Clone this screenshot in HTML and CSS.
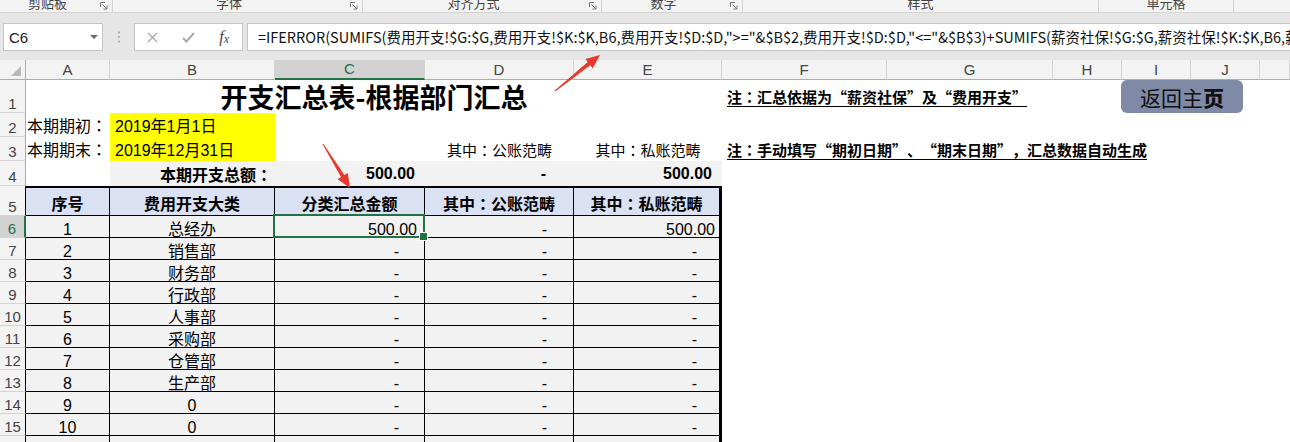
FILE: index.html
```html
<!DOCTYPE html>
<html>
<head>
  <meta charset="UTF-8">
  <title>开支汇总表</title>
  <link rel="stylesheet" href="styles.css">
</head>
<body>
  <div class="ribbon">
    <div class="grp g-clip"><span class="glabel">剪贴板</span><span class="launch"><svg width="8" height="8" viewBox="0 0 8 8"><path d="M0.5 5V0.5H5M2.5 2.5L7 7M7 3.5V7H3.5" fill="none" stroke="#7a7a7a" stroke-width="1"/></svg></span></div>
    <div class="grp g-font"><span class="glabel">字体</span><span class="launch"><svg width="8" height="8" viewBox="0 0 8 8"><path d="M0.5 5V0.5H5M2.5 2.5L7 7M7 3.5V7H3.5" fill="none" stroke="#7a7a7a" stroke-width="1"/></svg></span></div>
    <div class="grp g-align"><span class="glabel">对齐方式</span><span class="launch"><svg width="8" height="8" viewBox="0 0 8 8"><path d="M0.5 5V0.5H5M2.5 2.5L7 7M7 3.5V7H3.5" fill="none" stroke="#7a7a7a" stroke-width="1"/></svg></span></div>
    <div class="grp g-num"><span class="glabel">数字</span><span class="launch"><svg width="8" height="8" viewBox="0 0 8 8"><path d="M0.5 5V0.5H5M2.5 2.5L7 7M7 3.5V7H3.5" fill="none" stroke="#7a7a7a" stroke-width="1"/></svg></span></div>
    <div class="grp g-style"><span class="glabel">样式</span></div>
    <div class="grp g-cell"><span class="glabel">单元格</span></div>
    <div class="grp g-edit"></div>
  </div>

  <div class="fbar-area">
    <div class="fbar">
      <div class="namebox"><span>C6</span><span class="dd"></span></div>
      <div class="vdots"><svg width="4" height="12" viewBox="0 0 4 12"><circle cx="2" cy="1.5" r="1.1" fill="#a8a8a8"/><circle cx="2" cy="6" r="1.1" fill="#a8a8a8"/><circle cx="2" cy="10.5" r="1.1" fill="#a8a8a8"/></svg></div>
      <div class="fbtns">
        <span class="fb"><svg width="11" height="11" viewBox="0 0 11 11"><path d="M1 1L10 10M10 1L1 10" stroke="#a9a9a9" stroke-width="1.3"/></svg></span>
        <span class="fb"><svg width="13" height="11" viewBox="0 0 13 11"><path d="M1 6L4.5 9.5L12 1" fill="none" stroke="#a9a9a9" stroke-width="2"/></svg></span>
        <span class="fb fx"><i>f</i><i class="fxx">x</i></span>
      </div>
      <div class="formula">=IFERROR(SUMIFS(费用开支!$G:$G,费用开支!$K:$K,B6,费用开支!$D:$D,"&gt;="&amp;$B$2,费用开支!$D:$D,"&lt;="&amp;$B$3)+SUMIFS(薪资社保!$G:$G,薪资社保!$K:$K,B6,薪资社保!$D:$D,"&gt;="&amp;$B$2,薪资社保!$D:$D,"&lt;="&amp;$B$3),0)</div>
    </div>
  </div>

  <div class="sheet">
    <div class="row colhead">
      <div class="corner"></div>
      <div class="ch a">A</div>
      <div class="ch b">B</div>
      <div class="ch c sel">C</div>
      <div class="ch d">D</div>
      <div class="ch e">E</div>
      <div class="ch f">F</div>
      <div class="ch g">G</div>
      <div class="ch h">H</div>
      <div class="ch i">I</div>
      <div class="ch j">J</div>
      <div class="ch k"></div>
    </div>

    <div class="row r1">
      <div class="rh">1</div>
      <div class="cell title">开支汇总表-根据部门汇总</div>
      <div class="cell note note1"><span>注<span class="cln">：</span>汇总依据为“薪资社保”及“费用开支”</span></div>
      <div class="cell btnwrap"><button class="home">返回主<b>页</b></button></div>
      <div class="cell k"></div>
    </div>

    <div class="row r2">
      <div class="rh">2</div>
      <div class="cell a lbl">本期期初<span class="cln">：</span></div>
      <div class="cell b yellow">2019年1月1日</div>
      <div class="cell k"></div>
    </div>

    <div class="row r3">
      <div class="rh">3</div>
      <div class="cell a lbl">本期期末<span class="cln">：</span></div>
      <div class="cell b yellow">2019年12月31日</div>
      <div class="cell c"></div>
      <div class="cell d ctr sub">其中<span class="cln">：</span>公账范畴</div>
      <div class="cell e ctr sub">其中<span class="cln">：</span>私账范畴</div>
      <div class="cell k note"><span>注<span class="cln">：</span>手动填写“期初日期”、“期末日期”，汇总数据自动生成</span></div>
    </div>

    <div class="row r4">
      <div class="rh">4</div>
      <div class="cell a"></div>
      <div class="cell b tot rt total-label">本期开支总额<span class="cln">：</span></div>
      <div class="cell c tot rt">500.00</div>
      <div class="cell d tot rt tot-dash">-</div>
      <div class="cell e tot rt">500.00</div>
      <div class="cell k"></div>
    </div>

    <div class="row r5">
      <div class="rh trh">5</div>
      <div class="cell a t th ctr">序号</div>
      <div class="cell b t th ctr">费用开支大类</div>
      <div class="cell c t th ctr">分类汇总金额</div>
      <div class="cell d t th ctr">其中<span class="cln">：</span>公账范畴</div>
      <div class="cell e t th ctr">其中<span class="cln">：</span>私账范畴</div>
      <div class="cell k"></div>
    </div>

    <div class="row rd">
      <div class="rh trh cur">6</div>
      <div class="cell a t ctr">1</div>
      <div class="cell b t ctr">总经办</div>
      <div class="cell c t rt num sel">500.00</div>
      <div class="cell d t rt dash">-</div>
      <div class="cell e t rt num">500.00</div>
      <div class="cell k"></div>
    </div>
    <div class="row rd">
      <div class="rh trh">7</div>
      <div class="cell a t ctr">2</div>
      <div class="cell b t ctr">销售部</div>
      <div class="cell c t rt dash">-</div>
      <div class="cell d t rt dash">-</div>
      <div class="cell e t rt dash">-</div>
      <div class="cell k"></div>
    </div>
    <div class="row rd">
      <div class="rh trh">8</div>
      <div class="cell a t ctr">3</div>
      <div class="cell b t ctr">财务部</div>
      <div class="cell c t rt dash">-</div>
      <div class="cell d t rt dash">-</div>
      <div class="cell e t rt dash">-</div>
      <div class="cell k"></div>
    </div>
    <div class="row rd">
      <div class="rh trh">9</div>
      <div class="cell a t ctr">4</div>
      <div class="cell b t ctr">行政部</div>
      <div class="cell c t rt dash">-</div>
      <div class="cell d t rt dash">-</div>
      <div class="cell e t rt dash">-</div>
      <div class="cell k"></div>
    </div>
    <div class="row rd">
      <div class="rh trh">10</div>
      <div class="cell a t ctr">5</div>
      <div class="cell b t ctr">人事部</div>
      <div class="cell c t rt dash">-</div>
      <div class="cell d t rt dash">-</div>
      <div class="cell e t rt dash">-</div>
      <div class="cell k"></div>
    </div>
    <div class="row rd">
      <div class="rh trh">11</div>
      <div class="cell a t ctr">6</div>
      <div class="cell b t ctr">采购部</div>
      <div class="cell c t rt dash">-</div>
      <div class="cell d t rt dash">-</div>
      <div class="cell e t rt dash">-</div>
      <div class="cell k"></div>
    </div>
    <div class="row rd">
      <div class="rh trh">12</div>
      <div class="cell a t ctr">7</div>
      <div class="cell b t ctr">仓管部</div>
      <div class="cell c t rt dash">-</div>
      <div class="cell d t rt dash">-</div>
      <div class="cell e t rt dash">-</div>
      <div class="cell k"></div>
    </div>
    <div class="row rd">
      <div class="rh trh">13</div>
      <div class="cell a t ctr">8</div>
      <div class="cell b t ctr">生产部</div>
      <div class="cell c t rt dash">-</div>
      <div class="cell d t rt dash">-</div>
      <div class="cell e t rt dash">-</div>
      <div class="cell k"></div>
    </div>
    <div class="row rd">
      <div class="rh trh">14</div>
      <div class="cell a t ctr">9</div>
      <div class="cell b t ctr">0</div>
      <div class="cell c t rt dash">-</div>
      <div class="cell d t rt dash">-</div>
      <div class="cell e t rt dash">-</div>
      <div class="cell k"></div>
    </div>
    <div class="row rd">
      <div class="rh trh">15</div>
      <div class="cell a t ctr">10</div>
      <div class="cell b t ctr">0</div>
      <div class="cell c t rt dash">-</div>
      <div class="cell d t rt dash">-</div>
      <div class="cell e t rt dash">-</div>
      <div class="cell k"></div>
    </div>
    <div class="row rd">
      <div class="rh trh">16</div>
      <div class="cell a t"></div>
      <div class="cell b t"></div>
      <div class="cell c t"></div>
      <div class="cell d t"></div>
      <div class="cell e t"></div>
      <div class="cell k"></div>
    </div>
  </div>

  <!-- red callout arrows drawn on top of the screenshot -->
  <svg class="arrows" width="1290" height="442" viewBox="0 0 1290 442">
    <polygon points="554.7,90.6 587.8,62.1 585.3,59 600,55 592.7,68.4 590.2,65.3 555.3,91.4" fill="#e8392b"/>
    <polygon points="322.6,144.3 341,177.1 337.6,179.2 350,188 347.8,173 344.4,175.1 323.4,143.7" fill="#e8392b"/>
  </svg>
</body>
</html>
```

FILE: styles.css
```css
* {
  box-sizing: border-box;
}
html, body {
  margin: 0;
}
body {
  width: 1290px;
  height: 442px;
  overflow: hidden;
  position: relative;
  background: #fff;
  color: #000;
  font-family: "Liberation Sans", "Noto Sans CJK SC", sans-serif;
  font-size: 16px;
  text-spacing-trim: space-all;
}
/* full-width colon centred in its box, like the sheet's font */
.cln {
  font-family: "Noto Sans CJK TC", sans-serif;
}

/* Ribbon (only the group captions are visible) */
.ribbon {
  display: flex;
  height: 13px;
  background: #f3f3f3;
  border-bottom: 1px solid #d5d5d5;
  overflow: hidden;
}
.grp {
  display: flex;
  align-items: flex-end;
  height: 12px;
  border-right: 1px solid #d5d5d5;
}
.g-clip { width: 113px; }
.g-font { width: 250px; }
.g-align { width: 239px; }
.g-num { width: 141px; }
.g-style { width: 356px; }
.g-cell { width: 135px; }
.g-edit { flex: 1; border-right: none; }
.glabel {
  flex: 1;
  text-align: center;
  font-family: "Noto Sans CJK SC", sans-serif;
  font-size: 13px;
  line-height: 13px;
  color: #444;
  margin-bottom: 3px;
}
.launch {
  width: 17px;
  display: flex;
  justify-content: flex-end;
  padding: 0 4px 2px 0;
}

/* Formula bar */
.fbar-area {
  background: #e6e6e6;
  padding: 10px 0 9px;
}
.fbar {
  display: flex;
  height: 28px;
}
.namebox {
  margin-left: 3px;
  width: 100px;
  background: #fff;
  border: 1px solid #c6c6c6;
  display: flex;
  align-items: center;
  justify-content: space-between;
  padding: 0 4px 0 5px;
  font-size: 15px;
  color: #222;
}
.dd {
  width: 0;
  height: 0;
  border-left: 4px solid transparent;
  border-right: 4px solid transparent;
  border-top: 4px solid #6a6a6a;
}
.vdots {
  width: 31px;
  display: flex;
  align-items: center;
  justify-content: center;
}
.fbtns {
  width: 109px;
  background: #fff;
  border: 1px solid #c6c6c6;
  display: flex;
}
.fb {
  width: 36px;
  display: flex;
  align-items: center;
  justify-content: center;
}
.fx {
  font-family: "Liberation Serif", serif;
  font-size: 16px;
  color: #444;
}
.fxx {
  font-size: 12px;
  margin-top: 4px;
}
.formula {
  flex: 1;
  margin-left: 4px;
  background: #fff;
  border: 1px solid #c6c6c6;
  border-right: none;
  padding-left: 10px;
  font-family: "Noto Sans CJK SC", sans-serif;
  font-size: 14.5px;
  line-height: 26px;
  white-space: nowrap;
  overflow: hidden;
  color: #111;
}

/* Sheet grid */
.row {
  display: flex;
}
.colhead { height: 20px; }
.r1 { height: 33px; }
.r2 { height: 24px; }
.r3 { height: 24px; }
.r4 { height: 25px; }
.r5 { height: 30px; }
.rd { height: 22px; }

.corner {
  width: 26px;
  background: #f3f3f3;
  border-right: 1px solid #ababab;
  border-bottom: 1px solid #ababab;
  position: relative;
}
.corner::after {
  content: "";
  position: absolute;
  right: 4px;
  bottom: 3px;
  border-left: 10px solid transparent;
  border-bottom: 10px solid #b9b9b9;
}
.ch {
  display: flex;
  justify-content: center;
  align-items: flex-end;
  padding-bottom: 1px;
  background: #f3f3f3;
  border-right: 1px solid #d4d4d4;
  border-bottom: 1px solid #ababab;
  color: #444;
  font-size: 15px;
  line-height: 17px;
}
.ch.sel {
  background: #d2d2d2;
  color: #217346;
  border-bottom: 2px solid #217346;
}
.rh {
  width: 26px;
  flex: none;
  display: flex;
  align-items: flex-end;
  justify-content: center;
  background: #f3f3f3;
  border-right: 1px solid #ababab;
  border-bottom: 1px solid #d4d4d4;
  color: #444;
  font-size: 15px;
  line-height: 14px;
  padding-bottom: 1px;
}
.rh.trh {
  border-right-color: #000;
}
.rh.cur {
  background: #d2d2d2;
  color: #217346;
  border-right: 2px solid #217346;
}

.cell {
  flex: none;
  display: flex;
  align-items: center;
  white-space: nowrap;
  padding: 0 3px;
}
.a { width: 84px; }
.b { width: 165px; }
.c { width: 150px; }
.d { width: 149px; }
.e { width: 148px; }
.f { width: 165px; }
.g { width: 166px; }
.h { width: 69px; }
.i { width: 69px; }
.j { width: 69px; }
.k { flex: 1; }
.ctr { justify-content: center; }
.rt { justify-content: flex-end; }

/* Header area */
.title {
  width: 696px;
  justify-content: center;
  font-family: "Noto Sans CJK SC", sans-serif;
  font-size: 27px;
  font-weight: bold;
}
.note {
  font-family: "Noto Sans CJK SC", sans-serif;
  font-size: 15px;
  font-weight: bold;
  padding-left: 5px;
}
.note > span {
  text-decoration: underline;
  text-underline-offset: 3px;
}
.note1 { width: 399px; }
.btnwrap {
  width: 122px;
  padding: 0;
}
.home {
  width: 100%;
  height: 100%;
  border: none;
  border-radius: 6px;
  background: #7f8ba6;
  color: #111;
  font-family: "Noto Sans CJK SC", sans-serif;
  font-size: 21px;
  padding: 0;
}
.home b {
  font-weight: 900;
}
.lbl { padding-left: 1px; }
.yellow {
  background: #ffff00;
  padding-left: 5px;
}
.sub { font-size: 15px; }
.tot {
  background: #f2f2f2;
  font-weight: bold;
  padding-right: 10px;
}
.total-label { padding-right: 3px; }
.tot-dash { padding-right: 28px; }

/* Table */
.t {
  background: #f2f2f2;
  border-right: 1px solid #000;
  border-bottom: 1px solid #000;
  align-items: flex-end;
  line-height: 14px;
}
.t.e { border-right: 3px solid #000; }
.th {
  background: #d9e1f2;
  font-weight: bold;
  border-top: 2px solid #000;
  align-items: center;
  line-height: normal;
  padding-top: 2px;
}
.num { padding-right: 7px; }
.dash { padding-right: 25px; }
.d.dash { padding-right: 26px; }
.e.num { padding-right: 4px; }
.e.dash { padding-right: 22px; }

.sel {
  position: relative;
}
.cell.sel::after {
  content: "";
  position: absolute;
  left: -2px;
  top: -2px;
  right: -1px;
  bottom: -1px;
  border: 2px solid #217346;
}
.cell.sel::before {
  content: "";
  position: absolute;
  right: -4px;
  bottom: -4px;
  width: 7px;
  height: 7px;
  background: #217346;
  border: 1px solid #fff;
  z-index: 2;
}

.arrows {
  position: absolute;
  left: 0;
  top: 0;
  pointer-events: none;
}
```
